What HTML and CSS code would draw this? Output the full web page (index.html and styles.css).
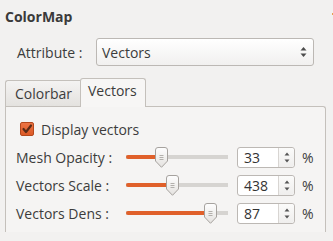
FILE: index.html
```html
<!DOCTYPE html>
<html>
<head>
<meta charset="utf-8">
<link rel="stylesheet" href="styles.css">
</head>
<body>
<div class="dot"></div>
<div class="title">ColorMap</div>
<div class="attr-row">
  <span class="attr-label">Attribute :</span>
  <div class="combo">
    <span class="combo-text">Vectors</span>
    <svg class="combo-arrows" width="7" height="12" viewBox="0 0 7 12"><path d="M3.5 1 L6.5 4.5 H0.5 Z" fill="#4c4c4c"/><path d="M3.5 11 L6.5 7.5 H0.5 Z" fill="#4c4c4c"/></svg>
  </div>
</div>
<div class="tabs">
  <div class="tabbar">
    <div class="tab">Colorbar</div>
    <div class="tab active">Vectors</div>
  </div>
  <div class="pane">
    <label class="check-row">
      <span class="checkbox"><svg width="14" height="14" viewBox="0 0 14 14"><path d="M3.5 7 L6 10 L11 3.5" fill="none" stroke="#5a2c18" stroke-width="2.2" stroke-linecap="round" stroke-linejoin="round"/></svg></span>
      <span>Display vectors</span>
    </label>
    <div class="row">
      <span class="label">Mesh Opacity :</span>
      <div class="slider"><div class="fill" style="width:33px"></div><svg class="handle" style="left:29px" width="13" height="21" viewBox="0 0 13 21"><defs><linearGradient id="hg" x1="0" y1="0" x2="0" y2="1"><stop offset="0" stop-color="#fefefe"/><stop offset="1" stop-color="#e4e2df"/></linearGradient></defs><path d="M0.5 3 Q0.5 0.5 3 0.5 H10 Q12.5 0.5 12.5 3 V14 L6.5 20.3 L0.5 14 Z" fill="url(#hg)" stroke="#a6a29e"/><path d="M4.5 8.5 H8.5 M4.5 10.5 H8.5 M4.5 12.5 H8.5" stroke="#b3b0ac"/></svg></div>
      <div class="spin"><span class="spin-val">33</span><span class="spin-btn"><svg width="6" height="13" viewBox="0 0 6 13"><path d="M3 1.5 L5.5 4.5 H0.5 Z" fill="#555"/><path d="M3 11.5 L5.5 8.5 H0.5 Z" fill="#555"/></svg></span></div>
      <span class="pct">%</span>
    </div>
    <div class="row">
      <span class="label">Vectors Scale :</span>
      <div class="slider"><div class="fill" style="width:44px"></div><svg class="handle" style="left:40px" width="13" height="21" viewBox="0 0 13 21"><path d="M0.5 3 Q0.5 0.5 3 0.5 H10 Q12.5 0.5 12.5 3 V14 L6.5 20.3 L0.5 14 Z" fill="url(#hg)" stroke="#a6a29e"/><path d="M4.5 8.5 H8.5 M4.5 10.5 H8.5 M4.5 12.5 H8.5" stroke="#b3b0ac"/></svg></div>
      <div class="spin"><span class="spin-val">438</span><span class="spin-btn"><svg width="6" height="13" viewBox="0 0 6 13"><path d="M3 1.5 L5.5 4.5 H0.5 Z" fill="#555"/><path d="M3 11.5 L5.5 8.5 H0.5 Z" fill="#555"/></svg></span></div>
      <span class="pct">%</span>
    </div>
    <div class="row">
      <span class="label">Vectors Dens :</span>
      <div class="slider"><div class="fill" style="width:82px"></div><svg class="handle" style="left:78px" width="13" height="21" viewBox="0 0 13 21"><path d="M0.5 3 Q0.5 0.5 3 0.5 H10 Q12.5 0.5 12.5 3 V14 L6.5 20.3 L0.5 14 Z" fill="url(#hg)" stroke="#a6a29e"/><path d="M4.5 8.5 H8.5 M4.5 10.5 H8.5 M4.5 12.5 H8.5" stroke="#b3b0ac"/></svg></div>
      <div class="spin"><span class="spin-val">87</span><span class="spin-btn"><svg width="6" height="13" viewBox="0 0 6 13"><path d="M3 1.5 L5.5 4.5 H0.5 Z" fill="#555"/><path d="M3 11.5 L5.5 8.5 H0.5 Z" fill="#555"/></svg></span></div>
      <span class="pct">%</span>
    </div>
  </div>
</div>
</body>
</html>
```
FILE: styles.css
```css
html, body {
  margin: 0;
  padding: 0;
}
body {
  width: 333px;
  height: 241px;
  overflow: hidden;
  background: #f2f1f0;
  font-family: "Open Sans", "Noto Sans", sans-serif;
  font-size: 14px;
  color: #3c3c3c;
  position: relative;
}
.dot {
  position: absolute;
  left: 332px;
  top: 13px;
  width: 1px;
  height: 2px;
  background: #e8a050;
}
.title {
  padding: 8px 0 0 5px;
  height: 20px;
  line-height: 18px;
  font-weight: bold;
  color: #3a3a3a;
}
.attr-row {
  display: flex;
  align-items: center;
  margin-top: 10px;
  height: 28px;
}
.attr-label {
  margin-left: 17px;
  width: 79px;
}
.combo {
  width: 218px;
  height: 28px;
  box-sizing: border-box;
  border: 1px solid #bcb8b4;
  border-radius: 3px;
  background: linear-gradient(#ffffff, #f1f0ef);
  display: flex;
  align-items: center;
  justify-content: space-between;
  padding: 0 6px 0 5px;
}
.tabs {
  margin: 11px 0 0 5px;
  width: 321px;
}
.tabbar {
  display: flex;
  align-items: flex-end;
  height: 29px;
}
.tab {
  box-sizing: border-box;
  height: 26px;
  padding: 0 9px;
  border: 1px solid #c4c0bb;
  border-bottom: none;
  border-right: none;
  border-radius: 3px 0 0 0;
  background: linear-gradient(#f4f3f2, #e4e2df);
  line-height: 26px;
  width: 75px;
}
.tab.active {
  height: 29px;
  width: 66px;
  line-height: 24px;
  border-right: 1px solid #c4c0bb;
  border-radius: 3px 3px 0 0;
  background: #f7f6f5;
  padding: 0 7px;
  position: relative;
  margin-bottom: -1px;
  z-index: 1;
}
.pane {
  box-sizing: border-box;
  height: 126px;
  border: 1px solid #c4c0bb;
  border-bottom: none;
  border-radius: 0 3px 0 0;
  background: #f5f4f3;
  padding: 8px 0 0 10px;
}
.check-row {
  display: flex;
  align-items: center;
  height: 28px;
  gap: 7px;
  padding-left: 4px;
}
.checkbox {
  width: 14px;
  height: 14px;
  box-sizing: border-box;
  border: 1px solid #b4481c;
  border-radius: 2px;
  background: linear-gradient(#ec7444, #dc5a26);
  display: flex;
}
.checkbox svg {
  margin: -1px;
}
.row {
  display: grid;
  grid-template-columns: 110px 102px 67px auto;
  align-items: center;
  height: 28px;
}
.slider {
  position: relative;
  height: 21px;
  background: linear-gradient(#d6d4d1, #d6d4d1) no-repeat 0 8px / 100% 4px;
  border-radius: 2px;
}
.fill {
  position: absolute;
  left: 0;
  top: 8px;
  height: 4px;
  border-radius: 2px;
  background: #e0602a;
}
.handle {
  position: absolute;
  top: 0;
}
.spin {
  margin-left: 9px;
  width: 58px;
  height: 21px;
  box-sizing: border-box;
  border: 1px solid #bcb8b4;
  border-radius: 3px;
  background: #ffffff;
  display: flex;
}
.spin-val {
  flex: 1;
  padding-left: 6px;
  line-height: 19px;
  color: #333;
}
.spin-btn {
  width: 15px;
  border-left: 1px solid #d8d5d2;
  background: linear-gradient(#fbfbfa, #efeeed);
  border-radius: 0 3px 3px 0;
  display: flex;
  align-items: center;
  justify-content: center;
}
.pct {
  margin-left: 7px;
}
```
